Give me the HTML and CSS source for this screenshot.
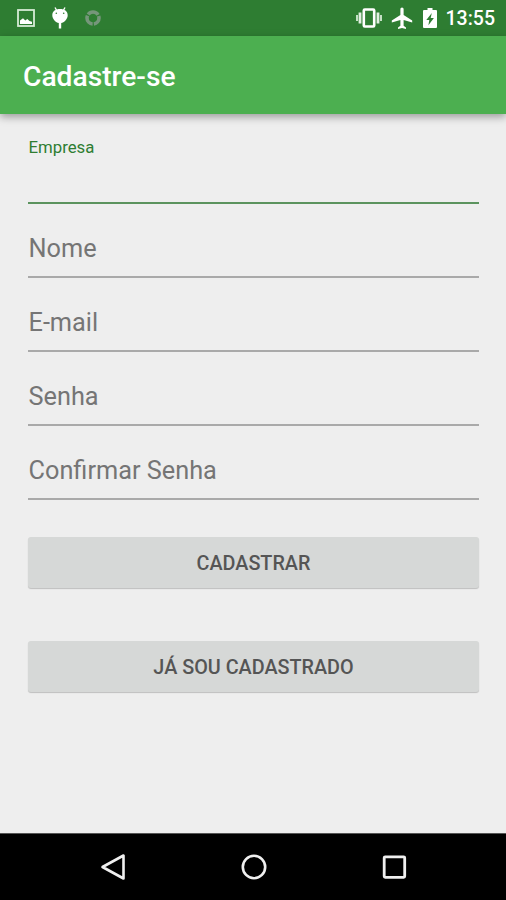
FILE: index.html
```html
<!DOCTYPE html>
<html lang="pt-BR">

<head>
    <meta charset="UTF-8">
    <title>Cadastre-se</title>
    <link rel="stylesheet" href="styles.css">
</head>

<body>

    <div class="status-bar">
        <svg class="icon-image" width="18" height="18" viewBox="0 0 18 18">
            <rect x="1" y="1" width="16" height="16" fill="none" stroke="#d5ebd5" stroke-width="1.8" />
            <path d="M3 15v-3.500l3-2.300 2.300 2.300 2-1.500 2.200 2 2.500.8V15z" fill="#fff" />
        </svg>
        <svg class="icon-droid" width="18" height="24" viewBox="0 0 18 24">
            <path d="M4 1.500l2 3.500M14 1.500l-2 3.500" stroke="#fff" stroke-width="1.400" />
            <path d="M9 3C4.500 3 1.300 5.200 1.300 9.200c0 4 3.700 7.300 6.500 7.700V22.500h2.400v-5.600c2.800-.4 6.500-3.700 6.500-7.700C16.700 5.200 13.500 3 9 3z" fill="#fff" />
            <circle cx="5.300" cy="7.300" r=".8" fill="#2e7d32" />
            <circle cx="12.700" cy="7.300" r=".8" fill="#2e7d32" />
        </svg>
        <svg class="icon-sync" width="18" height="18" viewBox="0 0 18 18">
            <circle cx="9" cy="9" r="6" fill="none" stroke="#75967a" stroke-width="3.600" stroke-dasharray="11.300 1.260" stroke-dashoffset="3" />
        </svg>
        <div class="status-right">
            <svg class="icon-vibrate" width="28" height="22" viewBox="0 0 28 22">
                <path d="M2 8v6M26 8v6" stroke="#c4e0c5" stroke-width="2" />
                <path d="M5 5.500v11M23 5.500v11" stroke="#e2f0e2" stroke-width="2.800" />
                <rect x="8.800" y="2.500" width="10.400" height="17" rx="1" fill="none" stroke="#fff" stroke-width="2.600" />
            </svg>
            <svg class="icon-plane" width="22" height="22" viewBox="2 1.500 20 20.500">
                <path d="M21.500 16v-2l-8-5V3.500C13.500 2.670 12.830 2 12 2s-1.500.67-1.500 1.500V9l-8 5v2l8-2.500V19l-2.200 1.500V22l3.700-1 3.700 1v-1.500L13.500 19v-5.500z" fill="#fff" />
            </svg>
            <svg class="icon-battery" width="14" height="22" viewBox="0 0 14 22">
                <path d="M4.500 1h5v2H13q1 0 1 1v16q0 1-1 1H1q-1 0-1-1V4q0-1 1-1h3.500z" fill="#fff" />
                <path d="M8.800 6L3.300 13h3l-.9 5.200L10.900 11H7.700z" fill="#2e7d32" />
            </svg>
            <span class="clock">13:55</span>
        </div>
    </div>

    <div class="toolbar">
        <h1>Cadastre-se</h1>
    </div>

    <form class="form">
        <div class="field active">
            <label>Empresa</label>
        </div>
        <div class="field"><label>Nome</label></div>
        <div class="field"><label>E-mail</label></div>
        <div class="field"><label>Senha</label></div>
        <div class="field"><label>Confirmar Senha</label></div>

        <button type="button" class="btn">CADASTRAR</button>
        <button type="button" class="btn">JÁ SOU CADASTRADO</button>
    </form>

    <div class="nav-bar">
        <svg width="28" height="28" viewBox="0 0 28 28">
            <path d="M23.500 2.500v23L2.500 14z" fill="none" stroke="#f0f0f0" stroke-width="2.600" stroke-linejoin="round" />
        </svg>
        <svg width="28" height="28" viewBox="0 0 28 28">
            <circle cx="14" cy="14" r="11.200" fill="none" stroke="#f0f0f0" stroke-width="2.600" />
        </svg>
        <svg width="28" height="28" viewBox="0 0 28 28">
            <rect x="4.200" y="3.800" width="20.500" height="20.500" rx="1" fill="none" stroke="#f0f0f0" stroke-width="2.800" />
        </svg>
    </div>

</body>

</html>
```

FILE: styles.css
```css
* {
    margin: 0;
    padding: 0;
    box-sizing: border-box;
}

body {
    display: flex;
    flex-direction: column;
    height: 900px;
    background: #eee;
    font-family: Roboto, "Liberation Sans", sans-serif;
    overflow: hidden;
}

svg {
    display: block;
    flex-shrink: 0;
}

.status-bar {
    display: flex;
    align-items: center;
    height: 36px;
    padding: 0 11px 0 17px;
    background: #2e7d32;
}

.icon-droid {
    margin-left: 16px;
}

.icon-sync {
    margin-left: 15px;
}

.status-right {
    display: flex;
    align-items: center;
    margin-left: auto;
}

.icon-plane {
    margin-left: 8px;
}

.icon-battery {
    margin-left: 10px;
}

.clock {
    margin-left: 9px;
    padding-top: 2px;
    color: #fff;
    font-size: 19.500px;
    font-weight: 500;
    line-height: 24px;
}

.toolbar {
    display: flex;
    align-items: center;
    height: 78px;
    padding-left: 23px;
    background: #4caf50;
    box-shadow: 0 3px 8px rgba(0, 0, 0, .35);
}

.toolbar h1 {
    padding-top: 3px;
    color: #fff;
    font-size: 28.200px;
    font-weight: 500;
    line-height: 32px;
}

.form {
    flex: 1;
    padding: 16px 27px 0 28px;
}

.field {
    height: 74px;
    padding-top: 30px;
    border-bottom: 2px solid #a9a9a9;
    color: #757575;
    font-size: 25.300px;
    line-height: 30px;
}

.field label {
    display: block;
    padding-left: .5px;
}

.field.active {
    height: 74px;
    padding-top: 7px;
    border-color: #5b935e;
    color: #2e7d32;
    font-size: 16.800px;
    line-height: 20px;
}

.btn {
    display: block;
    width: 100%;
    height: 51px;
    margin-top: 53px;
    padding-top: 2px;
    border: none;
    border-radius: 3px;
    background: #d6d8d7;
    box-shadow: 0 1px 1px rgba(0, 0, 0, .2);
    color: #555;
    font-family: inherit;
    font-size: 19.800px;
    font-weight: 500;
}

.field + .btn {
    margin-top: 37px;
}

.nav-bar {
    display: flex;
    justify-content: center;
    align-items: center;
    gap: 112px;
    height: 67px;
    padding-left: 1px;
    border-top: 1px solid #555;
    background: #000;
}
```
